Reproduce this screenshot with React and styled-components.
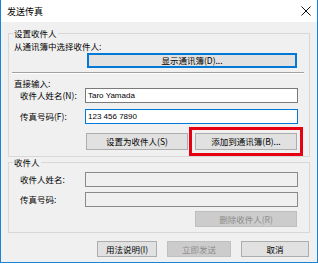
import React from 'react';
import styled, { createGlobalStyle } from 'styled-components';

const GlobalStyle = createGlobalStyle`
  body {
    margin: 0;
    background: #fff;
    font-family: "Noto Sans CJK SC", "Liberation Sans", sans-serif;
  }
`;

const App = () => {
  return (
    <>
      <GlobalStyle />
      <Window>
        <TitleBar>
          <TitleText>发送传真</TitleText>
          <CloseButton>
            <svg width="10" height="10" viewBox="0 0 10 10">
              <path d="M0.5 0.5 L9.5 9.5 M9.5 0.5 L0.5 9.5" stroke="#111" strokeWidth="1" />
            </svg>
          </CloseButton>
        </TitleBar>
        <Body>
          <Panel>
            <Legend>设置收件人</Legend>
            <PanelContent>
              <Hint>从通讯簿中选择收件人:</Hint>
              <ButtonRow $indent={73}>
                <Button $width={210} $height={15} $default>显示通讯簿(D)...</Button>
              </ButtonRow>
              <Separator />
              <SubTitle>直接输入:</SubTitle>
              <FieldRow>
                <FieldLabel>收件人姓名(N):</FieldLabel>
                <TextField>Taro Yamada</TextField>
              </FieldRow>
              <FieldRow $gap={6}>
                <FieldLabel>传真号码(F):</FieldLabel>
                <TextField $focused>123 456 7890</TextField>
              </FieldRow>
              <ButtonRow $indent={72} $top={9}>
                <Button $width={102} $height={17}>设置为收件人(S)</Button>
                <Button $width={102} $height={17} $highlight>添加到通讯簿(B)...</Button>
              </ButtonRow>
            </PanelContent>
          </Panel>
          <Panel $last>
            <Legend>收件人</Legend>
            <PanelContent $bottom={5}>
              <FieldRow $gap={5}>
                <FieldLabel>收件人姓名:</FieldLabel>
                <TextField $disabled />
              </FieldRow>
              <FieldRow $gap={5}>
                <FieldLabel>传真号码:</FieldLabel>
                <TextField $disabled />
              </FieldRow>
              <ButtonRow $indent={181} $top={4}>
                <Button $width={102} $height={16} disabled>删除收件人(R)</Button>
              </ButtonRow>
            </PanelContent>
          </Panel>
          <Footer>
            <Button $width={60} $height={16}>用法说明(I)</Button>
            <Button $width={64} $height={16} disabled>立即发送</Button>
            <Button $width={68} $height={16}>取消</Button>
          </Footer>
        </Body>
      </Window>
    </>
  );
};

const Window = styled.div`
  width: 318px;
  height: 263px;
  box-sizing: border-box;
  border: 1px solid #1883d7;
  border-top: none;
  display: flex;
  flex-direction: column;
  background: #f0f0f0;
`;

const TitleBar = styled.div`
  height: 22px;
  flex: none;
  display: flex;
  align-items: center;
  justify-content: space-between;
  padding: 0 6px 0 6px;
  background: #fff;
`;

const TitleText = styled.span`
  font-size: 9px;
  color: #000;
`;

const CloseButton = styled.span`
  display: flex;
  width: 10px;
  height: 10px;
`;

const Body = styled.div`
  flex: 1;
  padding: 6px 7px 0 7px;
  display: flex;
  flex-direction: column;
`;

const Panel = styled.fieldset`
  margin: 0;
  padding: 0;
  border: 1px solid #d8d8d8;
  min-width: 0;
`;

const Legend = styled.legend`
  margin-left: 4px;
  padding: 0 1px;
  font-size: 8.5px;
  line-height: 10px;
  height: 10px;
  color: #000;
`;

const PanelContent = styled.div`
  padding: 0 0 ${p => p.$bottom ?? 6}px 5px;
  display: flex;
  flex-direction: column;
  font-size: 8.5px;
  color: #000;
`;

const Hint = styled.div`
  margin-top: 2px;
  line-height: 12px;
`;

const SubTitle = styled.div`
  margin-top: 4px;
  line-height: 10px;
`;

const Separator = styled.div`
  margin: 4px 5px 0 -2px;
  height: 0;
  border-top: 1px solid #a0a0a0;
  border-bottom: 1px solid #fff;
`;

const ButtonRow = styled.div`
  display: flex;
  gap: 7px;
  margin-top: ${p => p.$top ?? 1}px;
  padding-left: ${p => p.$indent}px;
`;

const Button = styled.button`
  width: ${p => p.$width}px;
  height: ${p => p.$height}px;
  box-sizing: border-box;
  margin: 0;
  padding: 0;
  display: flex;
  align-items: center;
  justify-content: center;
  font-family: "Noto Sans CJK SC", "Liberation Sans", sans-serif;
  font-size: 8.5px;
  line-height: 1;
  color: #000;
  background: #e1e1e1;
  border: 1px solid ${p => (p.$default ? '#0078d7' : '#adadad')};
  box-shadow: ${p => (p.$default ? 'inset 0 0 0 1px #0078d7' : 'none')};
  outline: ${p => (p.$highlight ? '3px solid #e60012' : 'none')};
  outline-offset: 3px;

  &:disabled {
    background: #cccccc;
    border-color: #bfbfbf;
    color: #8d8d8d;
  }
`;

const FieldRow = styled.div`
  display: grid;
  grid-template-columns: 65px 213px;
  align-items: center;
  height: 15px;
  margin-top: ${p => p.$gap ?? 0}px;
  padding-left: 6px;
`;

const FieldLabel = styled.span`
  line-height: 15px;
  white-space: nowrap;
`;

const TextField = styled.div`
  height: 15px;
  box-sizing: border-box;
  padding-left: 2px;
  display: flex;
  align-items: center;
  font-family: "Liberation Sans", sans-serif;
  font-size: 8px;
  color: #000;
  background: ${p => (p.$disabled ? '#f0f0f0' : '#fff')};
  border: 1px solid ${p => (p.$focused ? '#0078d7' : p.$disabled ? '#8a8a8a' : '#7a7a7a')};
`;

const Footer = styled.div`
  display: flex;
  justify-content: flex-end;
  gap: 10px;
  margin-top: 8px;
  padding-right: 1px;
`;

export default App;
